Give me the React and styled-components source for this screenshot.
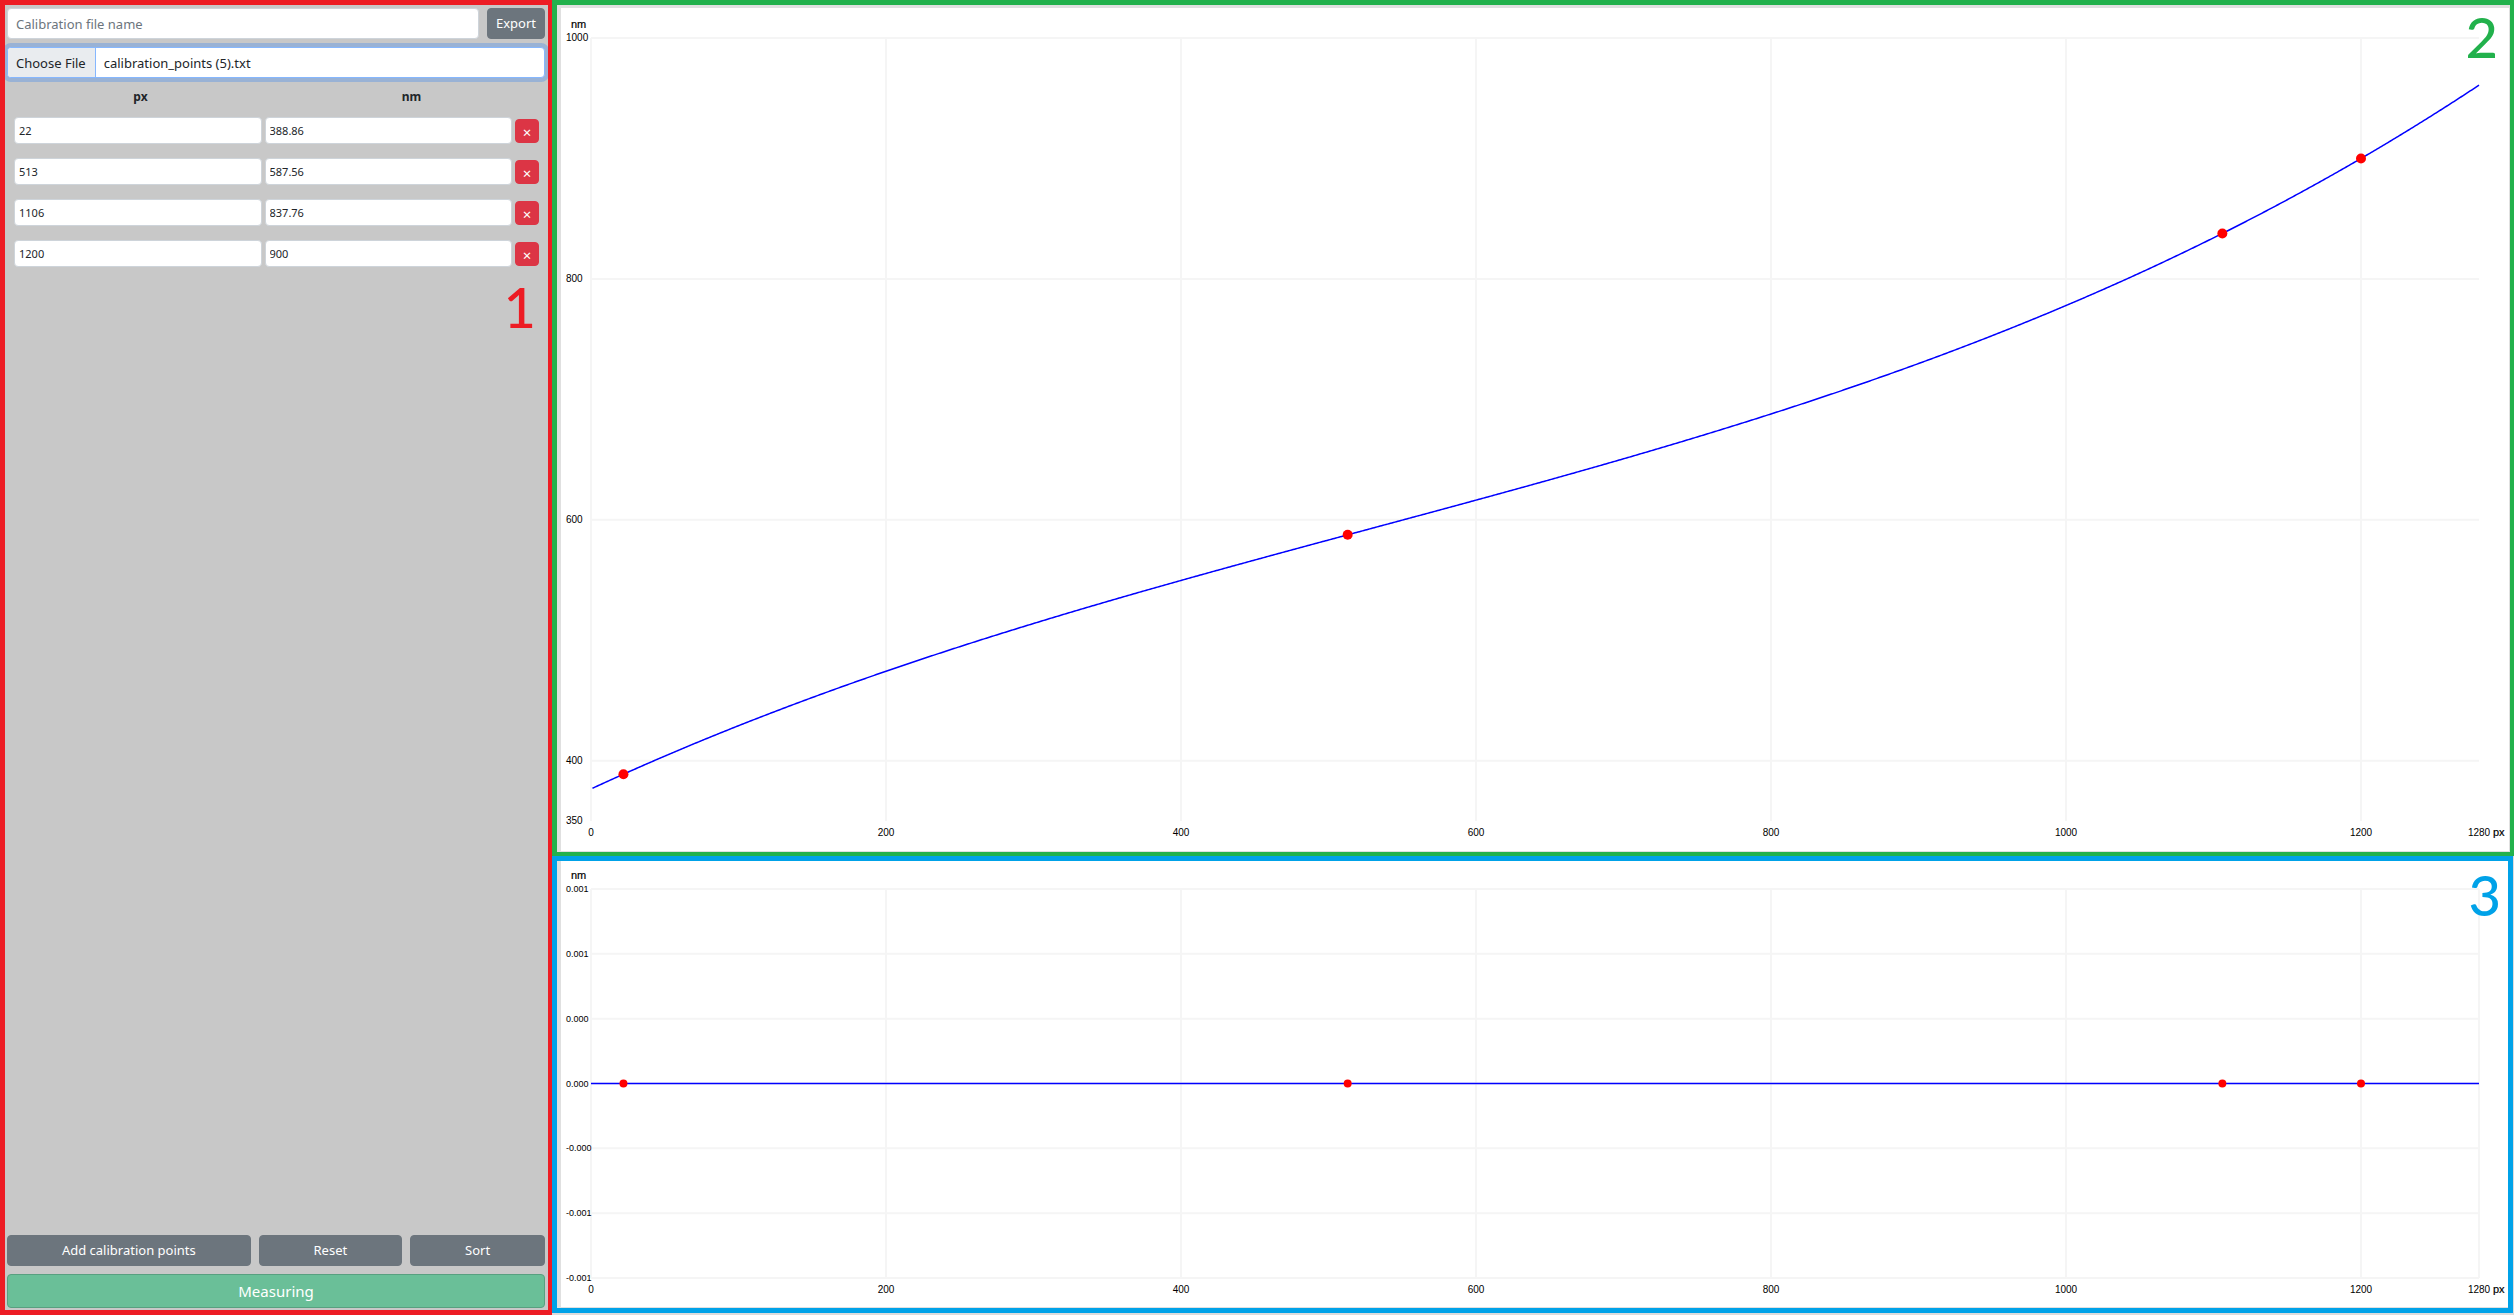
import React, { useEffect, useLayoutEffect, useRef, useState } from "react";
import styled, { createGlobalStyle } from "styled-components";

const UI_FONT = '"Noto Sans", "Open Sans", sans-serif';
const CHART_FONT = '"Liberation Sans", Arial, sans-serif';

const GlobalStyle = createGlobalStyle`
  *, *::before, *::after { box-sizing: border-box; }
  body { margin: 0; background: #dcdcdc; color: #212529; font-family: ${UI_FONT}; }
`;

const Page = styled.main`
  display: grid;
  grid-template-columns: minmax(0, 92fr) minmax(0, 327fr);
  height: 100vh;
`;

const Sidebar = styled.section`
  position: relative;
  display: flex;
  flex-direction: column;
  gap: 8px;
  padding: 3px 3px 2px 2px;
  border: solid #ed1c24;
  border-width: 5px 4px 5px 5px;
  background: #c8c8c8;
  overflow: hidden;
`;

const Charts = styled.div`
  display: grid;
  grid-template-rows: minmax(0, 856fr) minmax(0, 457fr);
  padding-bottom: 2px;
`;

const Row = styled.div`
  display: flex;
  gap: 8px;
`;

const TextField = styled.input`
  flex: 1;
  min-width: 0;
  height: ${(p) => (p.$compact ? 27 : 31)}px;
  padding: ${(p) => (p.$compact ? "0 4px" : "4px 8px")};
  border: 1px solid #ced4da;
  border-radius: 4px;
  background: #fff;
  color: #212529;
  font: ${(p) => (p.$compact ? 11 : 13)}px ${UI_FONT};
  &::placeholder { color: #6c757d; opacity: 1; }
`;

const FileField = styled.input`
  width: 100%;
  flex: none;
  height: 31px;
  padding: 4px 8px;
  border: 1px solid #86b7fe;
  border-radius: 4px;
  background: #fff;
  box-shadow: 0 0 0 4px rgba(13, 110, 253, 0.25);
  color: #212529;
  font: 13px/22px ${UI_FONT};
  overflow: hidden;
  &::file-selector-button {
    margin: -4px 8px -4px -8px;
    padding: 4px 9px 4px 8px;
    border: 0 solid #86b7fe;
    border-right-width: 1px;
    background: #e9ecef;
    color: #212529;
    font: inherit;
  }
`;

const Button = styled.button`
  flex: ${(p) => (p.$grow ? "1 1 auto" : "none")};
  height: 31px;
  padding: 0 8px;
  border: 1px solid #6c757d;
  border-radius: 4px;
  background: #6c757d;
  color: #fff;
  font: 13px/21px ${UI_FONT};
`;

const MeasureButton = styled(Button)`
  height: 34px;
  border-color: #58a080;
  background: #6abf98;
  font-size: 15px;
`;

const DeleteButton = styled(Button)`
  width: 24px;
  height: 24px;
  padding: 2px 0 0;
  border-color: #dc3545;
  background: #dc3545;
  font-size: 15px;
  line-height: 20px;
`;

const PointsTable = styled.table`
  display: block;
  flex: 1;
  min-height: 0;
  thead, tbody { display: block; }
`;

const HeadRow = styled.tr`
  display: grid;
  grid-template-columns: 1fr 1fr;
  height: 31px;
  margin: 0 -2px;
`;

const HeadCell = styled.th`
  padding: 0;
  font-size: 12px;
  line-height: 21px;
`;

const PointRow = styled.tr`
  display: grid;
  grid-template-columns: 1fr 1fr 24px;
  align-items: center;
  gap: 3px;
  height: 27px;
  margin: 0 6px 14px 7px;
`;

const Cell = styled.td`
  display: flex;
  padding: 0;
`;

const Marker = styled.span`
  position: absolute;
  top: ${(p) => p.$top}px;
  right: ${(p) => p.$right}px;
  color: ${(p) => p.$color};
  font: 500 56px/56px Lato, sans-serif;
`;

const ChartPanel = styled.section`
  position: relative;
  min-width: 0;
  min-height: 0;
  margin-right: ${(p) => p.$gap}px;
  padding: ${(p) => p.$pad};
  border: solid ${(p) => p.$color};
  border-width: ${(p) => p.$edges};
  background: #e0e0e0;
`;

const Plot = styled.div`
  width: 100%;
  height: 100%;
  background: #fff;
  overflow: hidden;
  svg { display: block; }
`;

const Tick = styled.text`
  font: ${(p) => (p.$small ? 9 : 10)}px ${CHART_FONT};
  fill: #000;
`;

const Unit = styled.text`
  font: 11px ${CHART_FONT};
  fill: #000;
  stroke: #000;
  stroke-width: 0.2px;
`;

const POINTS = [
  [22, 388.86],
  [513, 587.56],
  [1106, 837.76],
  [1200, 900],
];
const X_TICKS = [0, 200, 400, 600, 800, 1000, 1200, 1280];
const X_MAX = 1280;

// Cubic that passes through the four calibration points (Lagrange form).
function wavelength(x) {
  return POINTS.reduce((sum, [xi, yi], i) => {
    const basis = POINTS.reduce(
      (acc, [xj], j) => (i === j ? acc : (acc * (x - xj)) / (xi - xj)),
      1
    );
    return sum + yi * basis;
  }, 0);
}

function useSize() {
  const ref = useRef(null);
  const [size, setSize] = useState({ width: 0, height: 0 });
  useLayoutEffect(() => {
    const measure = () =>
      setSize({ width: ref.current.clientWidth, height: ref.current.clientHeight });
    measure();
    const observer = new ResizeObserver(measure);
    observer.observe(ref.current);
    return () => observer.disconnect();
  }, []);
  return [ref, size];
}

function Chart({ label, range, yTicks, value, points, radius, top, right, base, closed }) {
  const [ref, { width, height }] = useSize();
  const left = 30;
  const bottom = height - base;
  const [min, max] = range;
  const sx = (x) => left + (x / X_MAX) * (width - left - right);
  const sy = (y) => top + ((max - y) / (max - min)) * (bottom - top);
  const line = [];
  for (let x = closed ? 0 : 1; x <= X_MAX; x += 1) line.push(`${sx(x)},${sy(value(x))}`);
  return (
    <Plot ref={ref}>
      {width > 0 && (
        <svg width={width} height={height} role="img" aria-label={label}>
          <g stroke="#f5f5f5" strokeWidth="2">
            {X_TICKS.filter((x) => closed || x < X_MAX).map((x) => (
              <line key={x} x1={sx(x)} x2={sx(x)} y1={top} y2={bottom} />
            ))}
            {yTicks.filter((t) => !t.bare).map((t) => (
              <line key={t.at} x1={left} x2={sx(X_MAX)} y1={sy(t.at)} y2={sy(t.at)} />
            ))}
          </g>
          <polyline points={line.join(" ")} fill="none" stroke="#00f" strokeWidth="1.5" />
          {points.map(([x, y]) => (
            <circle key={x} cx={sx(x)} cy={sy(y)} r={radius} fill="#f00" />
          ))}
          {X_TICKS.map((x) => (
            <Tick key={x} x={sx(x)} y={bottom + 15} textAnchor="middle">{x}</Tick>
          ))}
          {yTicks.map((t) => (
            <Tick key={t.at} $small={closed} x={5} y={sy(t.at) + 3}>{t.text}</Tick>
          ))}
          <Unit x={10} y={top - 10}>nm</Unit>
          <Unit x={sx(X_MAX) + 14} y={bottom + 15}>px</Unit>
        </svg>
      )}
    </Plot>
  );
}

const CURVE_TICKS = [
  { at: 1000, text: "1000" },
  { at: 800, text: "800" },
  { at: 600, text: "600" },
  { at: 400, text: "400" },
  { at: 350, text: "350", bare: true },
];
const RESIDUAL_TICKS = [
  { at: 3, text: "0.001" },
  { at: 2, text: "0.001" },
  { at: 1, text: "0.000" },
  { at: 0, text: "0.000" },
  { at: -1, text: "-0.000" },
  { at: -2, text: "-0.001" },
  { at: -3, text: "-0.001" },
];

function CalibrationFile() {
  const ref = useRef(null);
  useEffect(() => {
    const transfer = new DataTransfer();
    const rows = POINTS.map((p) => p.join(" ")).join("\n");
    transfer.items.add(new File([rows], "calibration_points (5).txt", { type: "text/plain" }));
    ref.current.files = transfer.files;
  }, []);
  return <FileField ref={ref} type="file" aria-label="Calibration file" />;
}

export default function App() {
  return (
    <>
      <GlobalStyle />
      <Page>
        <Sidebar>
          <Row>
            <TextField type="text" placeholder="Calibration file name" aria-label="Calibration file name" />
            <Button type="button">Export</Button>
          </Row>
          <CalibrationFile />
          <PointsTable>
            <thead>
              <HeadRow>
                <HeadCell scope="col">px</HeadCell>
                <HeadCell scope="col">nm</HeadCell>
              </HeadRow>
            </thead>
            <tbody>
              {POINTS.map(([px, nm]) => (
                <PointRow key={px}>
                  <Cell><TextField $compact defaultValue={px} aria-label="px" /></Cell>
                  <Cell><TextField $compact defaultValue={nm} aria-label="nm" /></Cell>
                  <Cell><DeleteButton type="button" aria-label="Delete point">×</DeleteButton></Cell>
                </PointRow>
              ))}
            </tbody>
          </PointsTable>
          <Row>
            <Button type="button" $grow>Add calibration points</Button>
            <Button type="button" $grow>Reset</Button>
            <Button type="button" $grow>Sort</Button>
          </Row>
          <MeasureButton type="button">Measuring</MeasureButton>
          <Marker $top={274} $right={12} $color="#ed1c24">1</Marker>
        </Sidebar>
        <Charts>
          <ChartPanel $color="#22b14c" $edges="5px 4px 4px 5px" $pad="3px 1px 1px 4px" $gap={0}>
            <Chart
              label="Calibration curve"
              range={[350, 1000]}
              yTicks={CURVE_TICKS}
              value={wavelength}
              points={POINTS}
              radius={5}
              top={30}
              right={30}
              base={30}
            />
            <Marker $top={4} $right={12} $color="#22b14c">2</Marker>
          </ChartPanel>
          <ChartPanel $color="#00a2e8" $edges="5px" $pad="0 0 1px 4px" $gap={1}>
            <Chart
              label="Calibration residuals"
              range={[-3, 3]}
              yTicks={RESIDUAL_TICKS}
              value={() => 0}
              points={POINTS.map(([x]) => [x, 0])}
              radius={4}
              top={28}
              right={29}
              base={29}
              closed
            />
            <Marker $top={6} $right={7} $color="#00a2e8">3</Marker>
          </ChartPanel>
        </Charts>
      </Page>
    </>
  );
}
